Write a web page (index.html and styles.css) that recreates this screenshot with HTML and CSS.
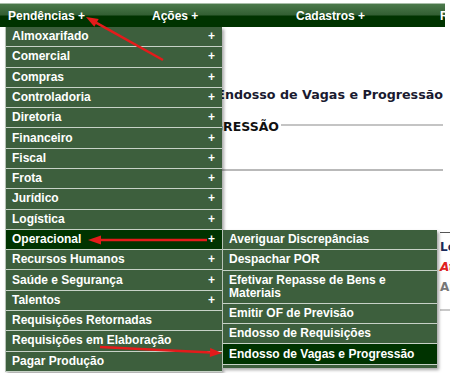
FILE: index.html
```html
<!DOCTYPE html>
<html lang="pt-BR">
<head>
    <meta charset="UTF-8">
    <title>Endosso de Vagas e Progressão</title>
    <link rel="stylesheet" href="styles.css">
</head>
<body>
    <nav class="topbar">
        <span class="topbar-item">Pendências +</span>
        <span class="topbar-item">Ações +</span>
        <span class="topbar-item">Cadastros +</span>
        <span class="topbar-item">Relatórios +</span>
    </nav>

    <main class="content">
        <h2 class="page-title">Pendências - Endosso de Vagas e Progressão</h2>
        <section class="box">
            <div class="box-title">ENDOSSO DE VAGAS E PROGRESSÃO</div>
        </section>
        <div class="details">
            <span class="detail-tick"></span>
            <span class="detail">Lotação</span>
            <span class="detail detail-alert">Atenção</span>
            <span class="detail detail-dim">Análise</span>
            <span class="detail-line"></span>
        </div>
    </main>

    <!-- dropdown aberto -->
    <ul class="menu">
        <li class="menu-item">Almoxarifado <span>+</span></li>
        <li class="menu-item">Comercial <span>+</span></li>
        <li class="menu-item">Compras <span>+</span></li>
        <li class="menu-item">Controladoria <span>+</span></li>
        <li class="menu-item">Diretoria <span>+</span></li>
        <li class="menu-item">Financeiro <span>+</span></li>
        <li class="menu-item">Fiscal <span>+</span></li>
        <li class="menu-item">Frota <span>+</span></li>
        <li class="menu-item">Jurídico <span>+</span></li>
        <li class="menu-item">Logística <span>+</span></li>
        <li class="menu-item active">Operacional <span>+</span></li>
        <li class="menu-item">Recursos Humanos <span>+</span></li>
        <li class="menu-item">Saúde e Segurança <span>+</span></li>
        <li class="menu-item">Talentos <span>+</span></li>
        <li class="menu-item">Requisições Retornadas</li>
        <li class="menu-item">Requisições em Elaboração</li>
        <li class="menu-item">Pagar Produção</li>
    </ul>

    <ul class="menu submenu">
        <li class="menu-item">Averiguar Discrepâncias</li>
        <li class="menu-item">Despachar POR</li>
        <li class="menu-item">Efetivar Repasse de Bens e Materiais</li>
        <li class="menu-item">Emitir OF de Previsão</li>
        <li class="menu-item">Endosso de Requisições</li>
        <li class="menu-item active">Endosso de Vagas e Progressão</li>
    </ul>

    <!-- setas de anotação -->
    <svg class="arrows" width="450" height="373" viewBox="0 0 450 373">
        <line x1="163" y1="60" x2="96" y2="22.6"/>
        <polygon points="86,17 98.7,18.9 94.3,26.8"/>
        <line x1="207" y1="240" x2="100" y2="240"/>
        <polygon points="88,240 101,235.5 101,244.5"/>
        <line x1="100" y1="347" x2="211" y2="352.4"/>
        <polygon points="222,353 209.8,356.9 210.2,347.9"/>
    </svg>
</body>
</html>
```

FILE: styles.css
```css
* {
    margin: 0;
    padding: 0;
    box-sizing: border-box;
}

body {
    position: relative;
    height: 373px;
    overflow: hidden;
    font-family: "Liberation Sans", Arial, sans-serif;
    font-size: 12px;
    color: #1b1b2b;
    background-color: #fff;
}

.topbar {
    display: flex;
    align-items: center;
    height: 24px;
    margin: 3px 5px 0 0;
    overflow: hidden;
    border-top: 1px solid #a9bfa9;
    background: linear-gradient(#4c7a4c, #335f33 46%, #003300 54%, #003300);
}

.topbar-item {
    flex-shrink: 0;
    width: 144px;
    padding-left: 8px;
    color: #fff;
    font-weight: bold;
}

.content {
    display: flex;
    flex-direction: column;
    padding: 60px 7px 0 10px;
}

.page-title {
    font-family: "DejaVu Sans", Verdana, sans-serif;
    font-size: 12.7px;
    line-height: 16px;
    text-align: right;
    color: #1a1a30;
    white-space: nowrap;
}

.box {
    flex-shrink: 0;
    height: 52px;
    margin-top: 16px;
    border-bottom: 2px solid #b9b9b9;
}

.box-title {
    display: flex;
    align-items: center;
    gap: 2px;
    line-height: 16px;
    padding-left: 13px;
    font-family: "DejaVu Sans", Verdana, sans-serif;
    font-size: 12.5px;
    font-weight: bold;
    color: #111;
    white-space: nowrap;
}

.box-title::after {
    content: "";
    flex: 1;
    height: 2px;
    margin-top: -4px;
    background-color: #c4c4c4;
}

.details {
    display: flex;
    flex-direction: column;
    width: 480px;
    padding: 61px 0 0 430px;
    font-family: "DejaVu Sans", Verdana, sans-serif;
    font-weight: bold;
    font-size: 12px;
    line-height: 20px;
}

.detail-tick {
    height: 1px;
    margin-bottom: 4px;
    background-color: #555;
}

.detail {
    color: #1a2a5a;
}

.detail-alert {
    color: #e02020;
    font-style: italic;
}

.detail-dim {
    color: #777;
}

.detail-line {
    height: 2px;
    margin-top: 12px;
    background-color: #c8c8c8;
}

.menu {
    position: absolute;
    left: 5px;
    top: 27px;
    width: 217px;
    list-style: none;
    background-color: #3d5f3d;
    border-left: 1px solid #b7c2b7;
    box-shadow: 2px 2px 3px rgba(0, 0, 0, 0.35);
}

.menu-item {
    display: flex;
    justify-content: space-between;
    padding: 3.15px 7px 3.15px 6px;
    line-height: 13px;
    border-bottom: 1px solid #c7d2c7;
    color: #fff;
    font-weight: bold;
}

.menu-item.active {
    background-color: #003300;
}

.submenu {
    left: 222px;
    top: 230px;
    width: 215px;
    padding-bottom: 3px;
}

.submenu .menu-item {
    padding-right: 20px;
}

.arrows {
    position: absolute;
    left: 0;
    top: 0;
    pointer-events: none;
}

.arrows line {
    stroke: #e41b1b;
    stroke-width: 2.5;
}

.arrows polygon {
    fill: #e41b1b;
}
```
